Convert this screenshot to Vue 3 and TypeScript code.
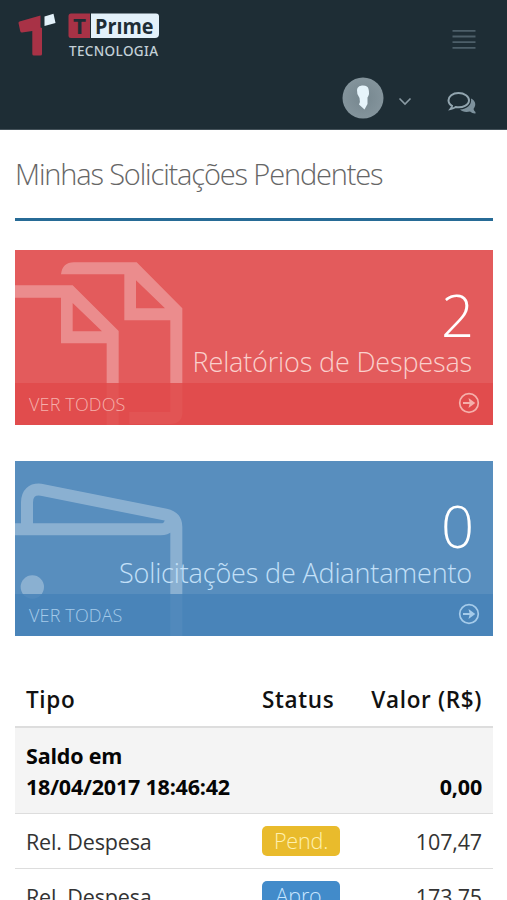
<script setup lang="ts">
interface Entry { type: string; status: string; tone: string; value: string }
const entries: Entry[] = [
  { type: 'Rel. Despesa', status: 'Pend.', tone: 'pending', value: '107,47' },
  { type: 'Rel. Despesa', status: 'Apro.', tone: 'approved', value: '173,75' },
]
const cards = [
  { kind: 'red', count: 2, label: 'Relatórios de Despesas', more: 'VER TODOS' },
  { kind: 'blue', count: 0, label: 'Solicitações de Adiantamento', more: 'VER TODAS' },
]
</script>

<template>
  <div class="page">
    <header class="header">
      <div class="brand-row">
        <svg class="logo" width="146" height="48" viewBox="0 0 146 48">
          <path d="M.5 11 Q.3 10 1.500 9.500 L22.500 3.500 V15.500 L24 16 V42 Q24 43.500 22.500 43.500 H16 Q14.300 43.500 14.300 42 V19 L4 20.500 Q2.500 20.500 2.200 19 Z" fill="#a83246" />
          <path d="M26.500 4.500 L35.500 1.800 L37.500 11 L26.500 14 Z" fill="#e3f1fa" />
          <path d="M53 1.500 H72 V26 H53 Q50.500 26 50.500 23.500 V4 Q50.500 1.500 53 1.500 Z" fill="#a83246" />
          <path d="M73 1.500 H138 Q141 1.500 141 4.500 V22 Q141 26 137 26 H73 Z" fill="#e3f1fa" />
          <text x="55" y="21.500" class="logo-name" fill="#1e2d35" textLength="13" lengthAdjust="spacingAndGlyphs">T</text>
          <text x="77" y="21.500" class="logo-name" fill="#1e2d35" textLength="58.500" lengthAdjust="spacingAndGlyphs">Prıme</text>
          <text x="51" y="44" class="logo-sub" fill="#c3d0d7" textLength="89">TECNOLOGIA</text>
        </svg>
        <svg class="menu" width="24" height="22" viewBox="0 0 24 22">
          <path d="M.5 2.800 H23.500 M.5 8.500 H23.500 M.5 14.200 H23.500 M.5 19.800 H23.500" stroke="#4d5f69" stroke-width="1.800" />
        </svg>
      </div>
      <div class="user-row">
        <svg width="42" height="42" viewBox="0 0 42 42">
          <defs>
            <radialGradient id="avatar"><stop offset="0" stop-color="#75868e" /><stop offset="1" stop-color="#84949c" /></radialGradient>
          </defs>
          <circle cx="21" cy="21" r="20.500" fill="url(#avatar)" />
          <path d="M15.500 11 Q17 8 21 8.500 Q26 8.500 26.500 12 Q28 17 25.500 20.500 L25.500 27 L22.500 32.500 L17 27.500 Q18.500 25 17.500 21 Q14.500 17 15 13 Z" fill="#e6f4fb" />
        </svg>
        <svg class="chevron" width="14" height="9" viewBox="0 0 14 9">
          <path d="M1.500 1.500 L7 7 L12.500 1.500" fill="none" stroke="#8b9ba4" stroke-width="1.600" />
        </svg>
        <svg class="chat" width="30" height="25" viewBox="0 0 30 25">
          <path d="M24 7.500 C28 9.500 30 13.500 26.500 18 Q27 20 28.500 21 V22.500 Q25.500 22.800 23 20.500 C18.500 21.600 15 20.500 13 18.500 C20 18 25 14 24 7.500 Z" fill="#7d919c" />
          <path d="M11.500 2 C5.500 2 1.500 5.500 1.500 9.200 C1.500 11.700 2.800 13.700 5 14.800 Q4.700 16.500 3.500 18 Q6.700 17.500 8.700 16 C15.700 17.300 22 14 22 9.200 C22 5.500 17.500 2 11.500 2 Z" fill="#1e2d35" stroke="#92a5af" stroke-width="2" />
        </svg>
      </div>
    </header>

    <main class="content">
      <h1 class="title">Minhas Solicitações Pendentes</h1>

      <section v-for="card in cards" :key="card.kind" class="card" :class="card.kind">
        <svg class="watermark" width="180" height="175.500" viewBox="45 29 540 526.500">
          <g v-if="card.kind === 'red'" fill="#fff" fill-rule="evenodd">
            <path d="M45 135 H218 L356 272 V556 H320 V309 H183 V172 H45 Z M218 188 V273 H306 Z" />
            <path d="M183 102 Q187 66 222 66 H410 L547 204 V521 Q545 550 512 551 H388 V515 H511 V240 H373 V102 Z M408 120 V204 H495 Z" />
          </g>
          <g v-else>
            <path d="M81 216 V153 Q82 112 122 115 L497 190 Q529 197 529 227 V556 M45 234 H482 Q511 234 513 201" fill="none" stroke="#fff" stroke-width="36" />
            <circle cx="97" cy="407" r="35" fill="#fff" />
          </g>
        </svg>
        <div class="details">
          <div class="count">{{ card.count }}</div>
          <div class="label">{{ card.label }}</div>
        </div>
        <a class="more">
          <span>{{ card.more }}</span>
          <svg width="22" height="22" viewBox="0 0 22 22">
            <circle cx="11" cy="11" r="9.300" fill="none" stroke="currentColor" stroke-width="1.700" />
            <path d="M5 9.900 H11.500 L10.500 6 L17.300 11 L10.500 16 L11.500 12.100 H5 Z" fill="currentColor" />
          </svg>
        </a>
      </section>

      <table class="table">
        <thead>
          <tr><th class="c-type">Tipo</th><th class="c-status">Status</th><th class="c-value">Valor (R$)</th></tr>
        </thead>
        <tbody>
          <tr class="balance"><td class="c-type">Saldo em<br>18/04/2017 18:46:42</td><td /><td class="c-value">0,00</td></tr>
          <tr v-for="entry in entries" :key="entry.value" class="entry">
            <td class="c-type">{{ entry.type }}</td>
            <td class="c-status"><span class="badge" :class="entry.tone">{{ entry.status }}</span></td>
            <td class="c-value">{{ entry.value }}</td>
          </tr>
        </tbody>
      </table>
    </main>
  </div>
</template>

<style>
body { margin: 0; background: #fff; }
</style>

<style scoped>
.page { width: 507px; height: 900px; overflow: hidden; background: #fff; font-family: "Open Sans", "Noto Sans", sans-serif; color: #333; }
.page * { box-sizing: border-box; }
.page svg { display: block; flex: none; }
.header { height: 130px; background: #1e2d35; border-bottom: 1px solid #445159; }
.brand-row { display: flex; justify-content: space-between; align-items: flex-start; padding: 12px 31px 0 18px; height: 77px; }
.menu { margin-top: 16px; }
.logo-name { font: 700 21px "Open Sans", sans-serif; }
.logo-sub { font: 500 13.5px "Noto Sans", sans-serif; }
.user-row { display: flex; align-items: center; justify-content: flex-end; padding-right: 30px; height: 42px; }
.chevron { margin: 7px 35px 0 14px; }
.chat { margin-top: 11px; }
.content { padding: 0 14px 0 15px; }
.title { margin: 0; height: 91px; padding-top: 24px; border-bottom: 3px solid #276b96; font-size: 29px; line-height: 40px; font-weight: 300; letter-spacing: -1.150px; color: #666; white-space: nowrap; }
.card { position: relative; margin-top: 28.500px; height: 175.500px; color: #fff; overflow: hidden; display: flex; flex-direction: column; }
.card + .card { margin-top: 35.500px; }
.red { background: #e35b5c; }
.blue { background: #588ebe; }
.watermark { position: absolute; left: 0; top: 0; opacity: .3; }
.details { position: relative; flex: 1; padding: 35px 21px 0 0; text-align: right; }
.count { font-size: 58px; line-height: 59px; font-weight: 300; letter-spacing: -2px; }
.label { font-size: 27px; line-height: 36px; font-weight: 300; white-space: nowrap; letter-spacing: -.16px; }
.red .label { color: #fad0cc; }
.blue .label { color: #c3e0f8; }
.more { position: relative; height: 42px; display: flex; align-items: center; justify-content: space-between; padding: 0 13px 2px 14px; font-size: 18px; font-weight: 300; letter-spacing: .15px; }
.more span { padding-top: 2px; }
.red .more { background: rgba(224, 74, 74, .85); color: #f5b0ab; }
.blue .more { background: rgba(70, 131, 184, .85); color: #a5cbea; }
.table { margin-top: 36px; width: 478px; border-collapse: separate; border-spacing: 0; table-layout: fixed; font-size: 21.5px; line-height: 31px; letter-spacing: -.15px; }
.table th, .table td { padding: 0 11px; text-align: left; }
.table .c-type { width: 236px; white-space: nowrap; }
.table .c-status { width: 104px; }
.table .c-value { text-align: right; white-space: nowrap; }
.table th { height: 56px; border-bottom: 2px solid #ddd; color: #111; font-size: 22.500px; font-weight: 600; letter-spacing: .650px; padding-bottom: 0; }
.table .balance td { height: 86px; background: #f4f4f4; border-bottom: 1px solid #ddd; vertical-align: bottom; padding-bottom: 11px; font-weight: 700; color: #050505; letter-spacing: -.2px; }
.table .entry td { height: 55px; border-bottom: 1px solid #ddd; }
.badge { display: block; width: 78px; height: 30px; border-radius: 5px; line-height: 29px; text-align: center; font-weight: 300; }
.pending { background: #e9bb2c; color: #fff0ae; }
.approved { background: #428bca; color: #c8e6ff; }
</style>
